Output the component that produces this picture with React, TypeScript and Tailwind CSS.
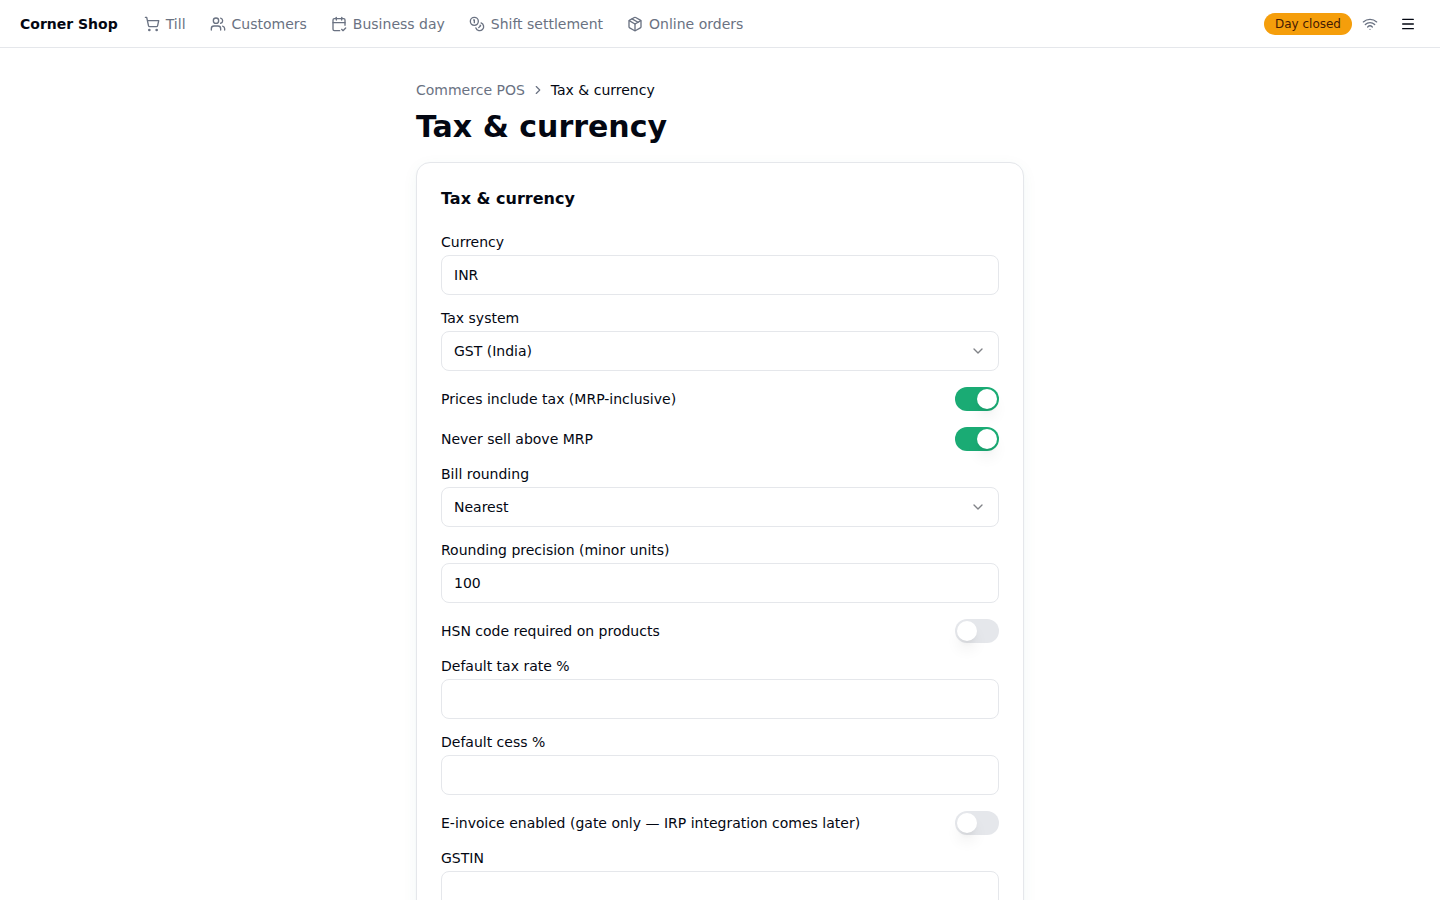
import React, { useState } from 'react';
import { CalendarCheck2, ChevronDown, ChevronRight, Coins, Menu, Package, ShoppingCart, Users, Wifi } from 'lucide-react';

const navItems = [
  { label: 'Till', icon: ShoppingCart },
  { label: 'Customers', icon: Users },
  { label: 'Business day', icon: CalendarCheck2 },
  { label: 'Shift settlement', icon: Coins },
  { label: 'Online orders', icon: Package },
];

const controlClass =
  'h-10 w-full rounded-lg border border-gray-200 bg-white px-3 text-sm text-gray-950 focus:outline-2 focus:outline-emerald-600';

interface TextFieldProps {
  id: string;
  label: string;
  value: string;
  onChange: (value: string) => void;
}

function TextField({ id, label, value, onChange }: TextFieldProps) {
  return (
    <div className="flex flex-col gap-1.5">
      <label htmlFor={id} className="text-sm leading-none">{label}</label>
      <input id={id} type="text" value={value} onChange={(e) => onChange(e.target.value)} className={controlClass} />
    </div>
  );
}

interface SelectFieldProps extends TextFieldProps {
  options: string[];
}

function SelectField({ id, label, value, onChange, options }: SelectFieldProps) {
  return (
    <div className="flex flex-col gap-1.5">
      <label htmlFor={id} className="text-sm leading-none">{label}</label>
      <div className="relative">
        <select
          id={id}
          value={value}
          onChange={(e) => onChange(e.target.value)}
          className={`${controlClass} appearance-none`}
        >
          {options.map((option) => (
            <option key={option} value={option}>{option}</option>
          ))}
        </select>
        <ChevronDown size={16} className="pointer-events-none absolute top-3 right-[13px] opacity-50" />
      </div>
    </div>
  );
}

interface SwitchFieldProps {
  id: string;
  label: string;
  checked: boolean;
  onChange: (checked: boolean) => void;
}

function SwitchField({ id, label, checked, onChange }: SwitchFieldProps) {
  return (
    <div className="flex items-center justify-between gap-4">
      <label htmlFor={id} className="text-sm leading-none">{label}</label>
      <input
        id={id}
        type="checkbox"
        role="switch"
        checked={checked}
        onChange={(e) => onChange(e.target.checked)}
        className="flex h-6 w-11 shrink-0 cursor-pointer appearance-none items-center rounded-full bg-gray-200 p-0.5 before:size-5 before:rounded-full before:bg-white before:shadow-lg before:transition-transform checked:bg-[#1aab74] checked:before:translate-x-5"
      />
    </div>
  );
}

export default function App() {
  const [settings, setSettings] = useState({
    currency: 'INR',
    taxSystem: 'GST (India)',
    pricesIncludeTax: true,
    neverAboveMrp: true,
    rounding: 'Nearest',
    precision: '100',
    hsnRequired: false,
    taxRate: '',
    cess: '',
    eInvoice: false,
    gstin: '',
  });

  const update = (patch: Partial<typeof settings>) => setSettings((prev) => ({ ...prev, ...patch }));

  return (
    <div className="min-h-screen bg-white font-['DejaVu_Sans',sans-serif] text-gray-950">
      <header className="flex h-12 items-center justify-between border-b border-gray-200 pr-3 pl-5">
        <div className="flex items-center gap-4">
          <a href="#" className="text-sm font-bold">Corner Shop</a>
          <nav className="flex items-center gap-1">
            {navItems.map(({ label, icon: Icon }) => (
              <a
                key={label}
                href="#"
                className="flex items-center gap-1.5 rounded-md px-2.5 py-1.5 text-sm text-gray-500 hover:text-gray-950"
              >
                <Icon size={16} />
                {label}
              </a>
            ))}
          </nav>
        </div>

        <div className="flex items-center gap-2.5">
          <span className="rounded-full bg-[#f59e0b] px-[11px] py-[3px] text-xs text-[#451a03]">Day closed</span>
          <Wifi size={16} className="text-gray-500" />
          <button type="button" aria-label="Menu" className="flex size-10 cursor-pointer items-center justify-center rounded-lg">
            <Menu size={16} />
          </button>
        </div>
      </header>

      <main className="mx-auto max-w-2xl px-8 py-8">
        <nav aria-label="Breadcrumb" className="flex items-center gap-1.5 text-sm">
          <a href="#" className="text-gray-500">Commerce POS</a>
          <ChevronRight size={14} className="text-gray-500" />
          <span aria-current="page">Tax &amp; currency</span>
        </nav>
        <h1 className="mt-2 text-3xl leading-[38px] font-bold">Tax &amp; currency</h1>

        <section className="mt-4 rounded-[14px] border border-gray-200 bg-white p-6 shadow-[0_1px_2px_rgba(16,120,90,0.04),0_4px_16px_rgba(16,120,90,0.05)]">
          <h2 className="font-bold">Tax &amp; currency</h2>
          <form className="mt-6 flex flex-col gap-4" onSubmit={(e) => e.preventDefault()}>
            <TextField id="currency" label="Currency" value={settings.currency} onChange={(currency) => update({ currency })} />
            <SelectField
              id="tax-system"
              label="Tax system"
              value={settings.taxSystem}
              onChange={(taxSystem) => update({ taxSystem })}
              options={['GST (India)']}
            />
            <SwitchField
              id="prices-include-tax"
              label="Prices include tax (MRP-inclusive)"
              checked={settings.pricesIncludeTax}
              onChange={(pricesIncludeTax) => update({ pricesIncludeTax })}
            />
            <SwitchField
              id="never-above-mrp"
              label="Never sell above MRP"
              checked={settings.neverAboveMrp}
              onChange={(neverAboveMrp) => update({ neverAboveMrp })}
            />
            <SelectField
              id="rounding"
              label="Bill rounding"
              value={settings.rounding}
              onChange={(rounding) => update({ rounding })}
              options={['Nearest']}
            />
            <TextField
              id="precision"
              label="Rounding precision (minor units)"
              value={settings.precision}
              onChange={(precision) => update({ precision })}
            />
            <SwitchField
              id="hsn-required"
              label="HSN code required on products"
              checked={settings.hsnRequired}
              onChange={(hsnRequired) => update({ hsnRequired })}
            />
            <TextField id="tax-rate" label="Default tax rate %" value={settings.taxRate} onChange={(taxRate) => update({ taxRate })} />
            <TextField id="cess" label="Default cess %" value={settings.cess} onChange={(cess) => update({ cess })} />
            <SwitchField
              id="e-invoice"
              label="E-invoice enabled (gate only — IRP integration comes later)"
              checked={settings.eInvoice}
              onChange={(eInvoice) => update({ eInvoice })}
            />
            <TextField id="gstin" label="GSTIN" value={settings.gstin} onChange={(gstin) => update({ gstin })} />
          </form>
        </section>
      </main>
    </div>
  );
}
